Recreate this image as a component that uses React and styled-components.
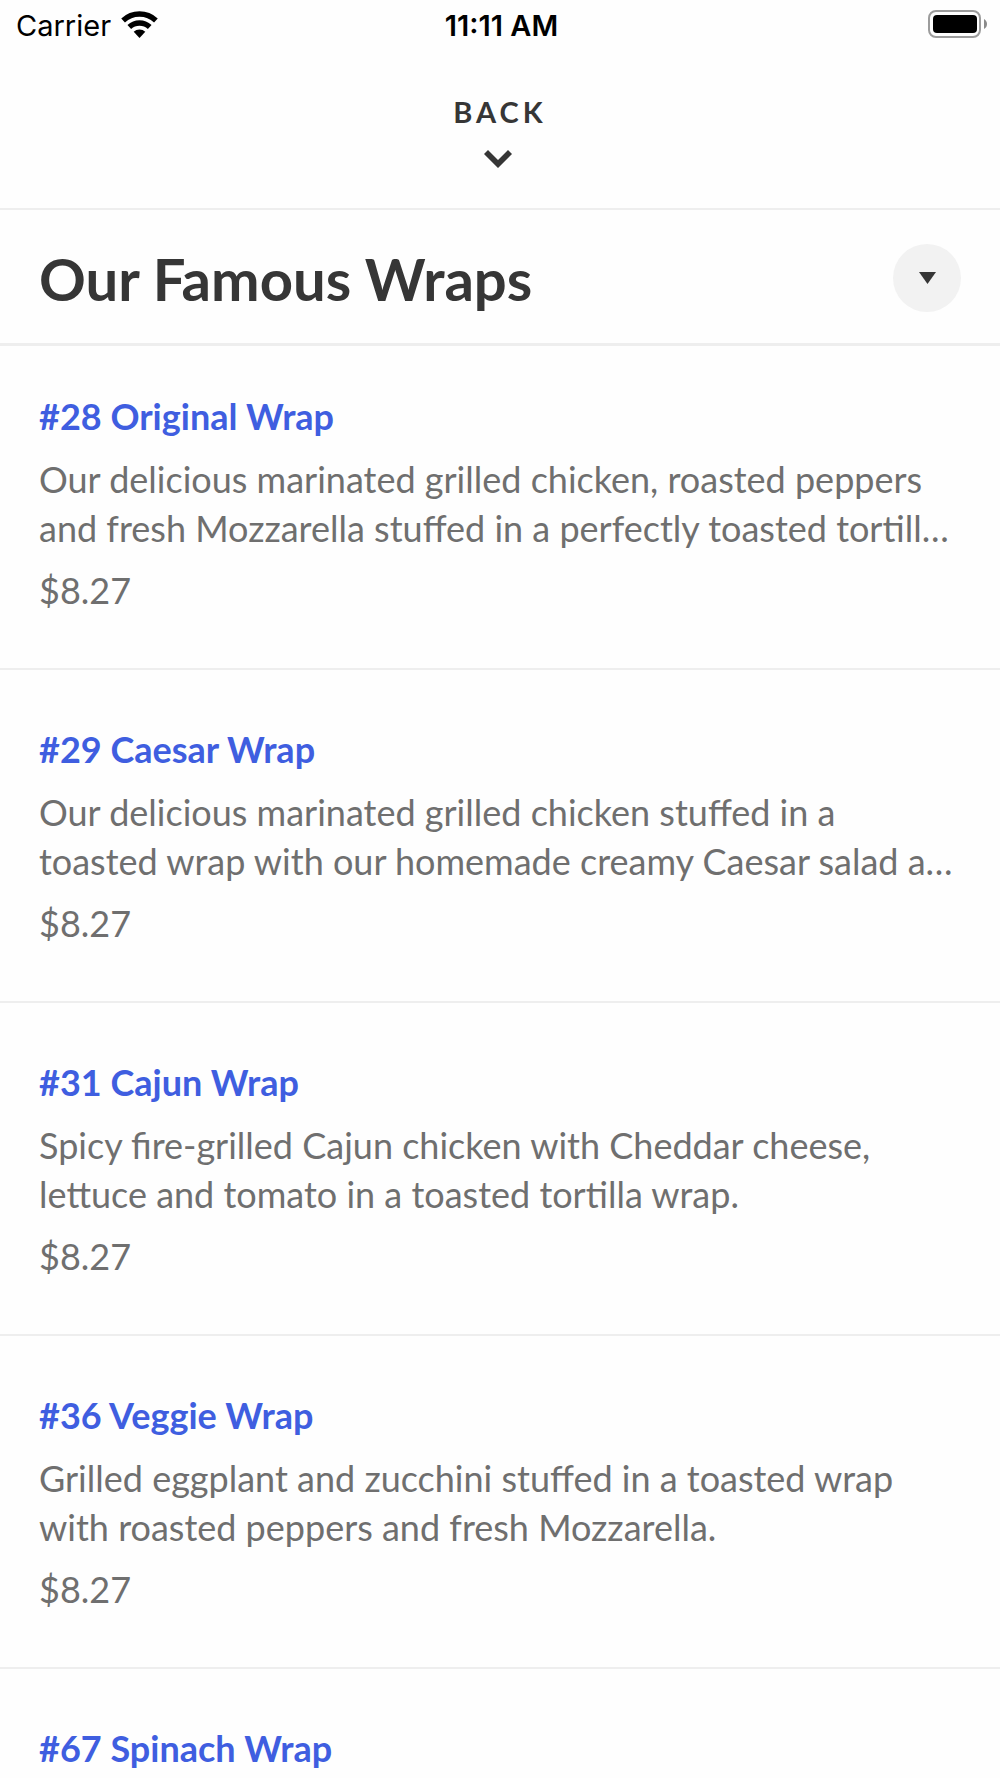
import { useState } from 'react';
import styled, { createGlobalStyle } from 'styled-components';

const GlobalStyle = createGlobalStyle`
  :root {
    --text: #363636;
    --grey: #6f6f6f;
    --blue: #3f5ee0;
    --line: #eeeeee;
    --gutter: 39px;
  }
  * {
    box-sizing: border-box;
    margin: 0;
    padding: 0;
  }
  body {
    background: #fefefe;
    color: var(--text);
    font-family: Lato, sans-serif;
    overflow-x: hidden;
  }
  button {
    border: none;
    background: transparent;
    color: inherit;
    font-family: inherit;
    cursor: pointer;
  }
`;

const StatusBar = styled.div`
  display: grid;
  grid-template-columns: 1fr auto 1fr;
  align-items: center;
  height: 52px;
  padding: 0 13px 4px 16px;
  color: #000;
  font-family: Inter, sans-serif;
  font-size: 29px;
  line-height: 32px;
  span {
    padding-top: 4px;
  }
  .carrier {
    display: flex;
    align-items: center;
    gap: 10px;
  }
  .time {
    font-weight: 600;
  }
  .battery {
    justify-self: end;
  }
  svg {
    display: block;
  }
`;

const Nav = styled.header`
  display: flex;
  justify-content: center;
  height: 158px;
  border-bottom: 2px solid var(--line);
`;

const BackButton = styled.button`
  display: flex;
  flex-direction: column;
  align-items: center;
  gap: 20px;
  padding: 42px 24px 0;
  font-size: 29px;
  font-weight: 700;
  line-height: 36px;
  letter-spacing: 4px;
  text-transform: uppercase;
`;

const SectionHeader = styled.div`
  display: flex;
  align-items: center;
  justify-content: space-between;
  height: 135px;
  padding: 2px var(--gutter) 0;
  border-bottom: 2px solid var(--line);
  h1 {
    padding-top: 2px;
    font-size: 58px;
    font-weight: 700;
    line-height: 68px;
  }
`;

const ToggleButton = styled.button`
  display: flex;
  align-items: center;
  justify-content: center;
  width: 68px;
  height: 68px;
  border-radius: 50%;
  background: #f2f2f2;
`;

const MenuList = styled.ul`
  list-style: none;
  border-top: 1px solid var(--line);
`;

const MenuItem = styled.li`
  padding: 55px var(--gutter) 54px;
  border-bottom: 2px solid var(--line);
  font-size: 36px;
  line-height: 48px;
  color: var(--grey);
  &:first-child {
    padding-top: 46px;
  }
  &:last-child {
    padding-bottom: 0;
    border-bottom: none;
  }
  h2 {
    font-size: 36px;
    font-weight: 700;
  }
  a {
    color: var(--blue);
    text-decoration: none;
  }
  .description {
    margin: 15px 0 13px;
    line-height: 49px;
  }
`;

const wraps = [
  {
    id: 28,
    name: 'Original Wrap',
    description:
      'Our delicious marinated grilled chicken, roasted peppers and fresh Mozzarella stuffed in a perfectly toasted tortill…',
    price: 8.27,
  },
  {
    id: 29,
    name: 'Caesar Wrap',
    description:
      'Our delicious marinated grilled chicken stuffed in a toasted wrap with our homemade creamy Caesar salad a…',
    price: 8.27,
  },
  {
    id: 31,
    name: 'Cajun Wrap',
    description:
      'Spicy fire-grilled Cajun chicken with Cheddar cheese, lettuce and tomato in a toasted tortilla wrap.',
    price: 8.27,
  },
  {
    id: 36,
    name: 'Veggie Wrap',
    description:
      'Grilled eggplant and zucchini stuffed in a toasted wrap with roasted peppers and fresh Mozzarella.',
    price: 8.27,
  },
  {
    id: 67,
    name: 'Spinach Wrap',
  },
];

const WifiIcon = () => (
  <svg width="37" height="28" viewBox="0 0 37 28" aria-hidden="true">
    <g fill="none" stroke="#000" strokeWidth="5.4">
      <path d="M2.100 10.450a24 24 0 0 1 32.800 0" />
      <path d="M8.300 17a15 15 0 0 1 20.400 0" />
    </g>
    <path d="M12.700 21.800a8.500 8.500 0 0 1 11.600 0L18.500 28z" />
  </svg>
);

const BatteryIcon = () => (
  <svg width="59" height="28" viewBox="0 0 59 28" aria-hidden="true">
    <rect x="1" y="1" width="51" height="26" rx="7" fill="none" stroke="#9c9c9c" strokeWidth="2" />
    <rect x="5" y="5" width="44" height="18" rx="4" />
    <path d="M56 9c4 2 4 8 0 10z" fill="#8a8a8a" />
  </svg>
);

const App = () => {
  const [open, setOpen] = useState(true);

  return (
    <>
      <GlobalStyle />
      <StatusBar>
        <div className="carrier">
          <span>Carrier</span>
          <WifiIcon />
        </div>
        <span className="time">11:11 AM</span>
        <div className="battery">
          <BatteryIcon />
        </div>
      </StatusBar>
      <Nav>
        <BackButton type="button">
          Back
          <svg width="32" height="18" viewBox="0 0 32 18" aria-hidden="true">
            <path d="M0 4l4-4 10 10L24 0l4 4-14 14z" fill="#363636" />
          </svg>
        </BackButton>
      </Nav>
      <main>
        <SectionHeader>
          <h1>Our Famous Wraps</h1>
          <ToggleButton
            type="button"
            aria-label="Toggle section"
            aria-expanded={open}
            onClick={() => setOpen(!open)}
          >
            <svg width="17" height="12" viewBox="0 0 17 12" aria-hidden="true">
              <path d="M0 0h17l-8.500 12z" fill="#363636" />
            </svg>
          </ToggleButton>
        </SectionHeader>
        {open && (
          <MenuList>
            {wraps.map(({ id, name, description, price }) => (
              <MenuItem key={id}>
                <h2>
                  <a href={`#wrap-${id}`}>
                    #{id} {name}
                  </a>
                </h2>
                {description && <p className="description">{description}</p>}
                {price && <p>${price}</p>}
              </MenuItem>
            ))}
          </MenuList>
        )}
      </main>
    </>
  );
};

export default App;
